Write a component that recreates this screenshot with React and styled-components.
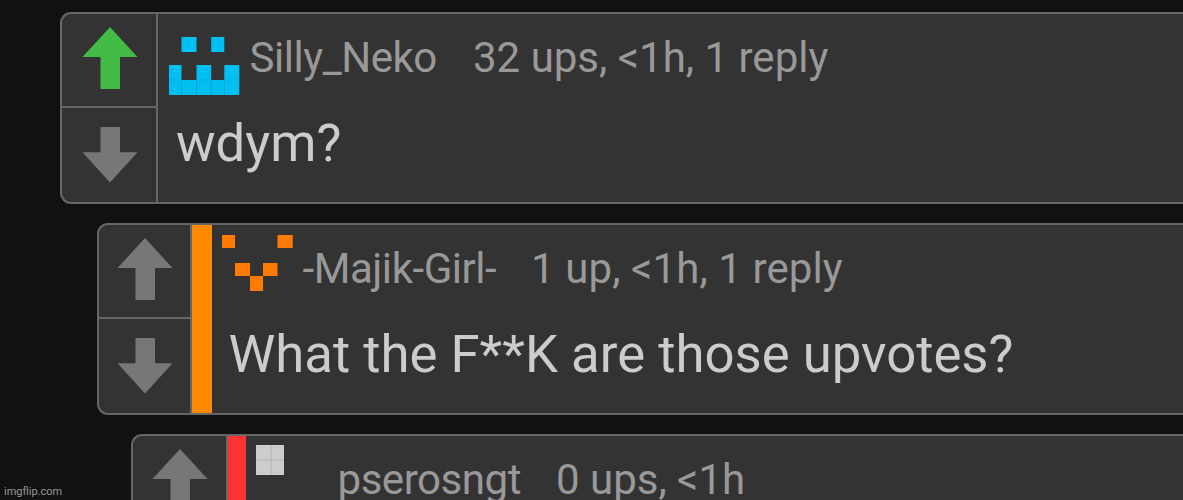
import React from "react";
import styled, { createGlobalStyle } from "styled-components";

const GlobalStyle = createGlobalStyle`
  * {
    box-sizing: border-box;
  }

  body {
    margin: 0;
    background: #111;
    overflow: hidden;
    font-family: Roboto, "Liberation Sans", sans-serif;
  }
`;

const comments = [
  {
    user: "Silly_Neko",
    stats: "32 ups, <1h, 1 reply",
    text: "wdym?",
    indent: 60,
    voteWidth: 98,
    arrowShift: 1,
    upvoted: true,
    iconColor: "#00bff3",
    iconGap: 11,
    xs: [0, 12.5, 27.5, 42.2, 55.3, 70.3],
    ys: [0, 13, 28, 41, 56, 71],
    seam: "#08a5d3",
    pixels: [[1, 1], [3, 1], [0, 3], [2, 3], [4, 3], [0, 4], [1, 4], [2, 4], [3, 4], [4, 4]],
    nameGap: 9.5,
    nameWidth: 223.5,
    textLeft: 18
  },
  {
    user: "-Majik-Girl-",
    stats: "1 up, <1h, 1 reply",
    text: "What the F**K are those upvotes?",
    indent: 97,
    voteWidth: 95,
    arrowShift: 1,
    bar: "#ff8a00",
    barWidth: 20,
    iconColor: "#ff7b00",
    iconGap: 10,
    xs: [0, 13, 28, 41, 55.5, 70.7],
    ys: [0, 13, 28, 41, 56, 71],
    seam: "#ff7b00",
    pixels: [[0, 0], [4, 0], [1, 2], [3, 2], [2, 3]],
    nameGap: 9.5,
    nameWidth: 228.5,
    statsSpacing: 0.1,
    textLeft: 16.5
  },
  {
    user: "pserosngt",
    stats: "0 ups, <1h",
    text: "",
    indent: 131,
    voteWidth: 97,
    arrowShift: 0,
    bar: "#ff3333",
    barWidth: 18,
    iconColor: "#cccccc",
    iconGap: 10,
    xs: [0, 15, 28, 42, 56, 71],
    ys: [-1, 14, 29, 42, 57, 71],
    seam: "#aaa",
    pixels: [[0, 0], [1, 0], [0, 1], [1, 1]],
    nameGap: 10.5,
    nameWidth: 218.5,
    textLeft: 18
  }
];

function PixelIcon({ xs, ys, pixels, color, seam }) {
  const filled = (x, y) => pixels.some(p => p[0] === x && p[1] === y);
  return (
    <Icon viewBox="0 0 71 71">
      {pixels.map(([x, y]) => (
        <rect
          key={`${x}-${y}`}
          x={xs[x]}
          y={ys[y]}
          width={xs[x + 1] - xs[x]}
          height={ys[y + 1] - ys[y]}
          fill={color}
        />
      ))}
      {pixels.map(([x, y]) => (
        <g key={`${x}-${y}`} stroke={seam} strokeWidth="0.7">
          {filled(x + 1, y) && (
            <line x1={xs[x + 1]} x2={xs[x + 1]} y1={ys[y]} y2={ys[y + 1]} />
          )}
          {filled(x, y + 1) && (
            <line x1={xs[x]} x2={xs[x + 1]} y1={ys[y + 1]} y2={ys[y + 1]} />
          )}
        </g>
      ))}
    </Icon>
  );
}

function Comment({ comment }) {
  return (
    <Card $indent={comment.indent}>
      <Votes $width={comment.voteWidth}>
        <VoteButton $up $shift={comment.arrowShift}>
          <svg width="56" height="62" viewBox="0 0 56 62">
            <path
              d="M28 0L55.5 30H38V62H18.5V30H0.5Z"
              fill={comment.upvoted ? "#44bb44" : "#777"}
            />
          </svg>
        </VoteButton>
        <VoteButton $shift={comment.arrowShift}>
          <svg width="56" height="56" viewBox="0 0 56 56">
            <path d="M18.5 0H38V25.3H55.5L28 55.5L0.5 25.3H18.5Z" fill="#777" />
          </svg>
        </VoteButton>
      </Votes>
      {comment.bar && <LevelBar $color={comment.bar} $width={comment.barWidth} />}
      <Content>
        <Header $gap={comment.iconGap}>
          <PixelIcon
            xs={comment.xs}
            ys={comment.ys}
            pixels={comment.pixels}
            color={comment.iconColor}
            seam={comment.seam}
          />
          <Name $gap={comment.nameGap} $width={comment.nameWidth}>
            {comment.user}
          </Name>
          <Stats $spacing={comment.statsSpacing || 0}>{comment.stats}</Stats>
        </Header>
        {comment.text && <Text $left={comment.textLeft}>{comment.text}</Text>}
      </Content>
    </Card>
  );
}

function App() {
  return (
    <Page>
      <GlobalStyle />
      <Thread>
        {comments.map(comment => (
          <Comment key={comment.user} comment={comment} />
        ))}
      </Thread>
      <Watermark>imgflip.com</Watermark>
    </Page>
  );
}

export default App;

const Page = styled.div`
  position: relative;
  width: 1183px;
  height: 500px;
  overflow: hidden;
  background: #111;
`;

const Thread = styled.div`
  display: flex;
  flex-direction: column;
  gap: 19px;
  padding-top: 12px;
`;

const Card = styled.div`
  display: flex;
  flex-shrink: 0;
  height: 192px;
  margin-left: ${props => props.$indent}px;
  background: #333;
  border: 2px solid #666;
  border-right: 0;
  border-radius: 11px 0 0 11px;
  overflow: hidden;
`;

const Votes = styled.div`
  display: flex;
  flex-direction: column;
  flex-shrink: 0;
  /* the card's left border counts towards the column */
  width: ${props => props.$width - 2}px;
  border-right: 2px solid #666;
`;

const VoteButton = styled.div`
  display: flex;
  justify-content: center;
  height: 94px;
  padding-top: ${props => (props.$up ? 13 : 19)}px;
  padding-left: ${props => props.$shift}px;
  border-bottom: ${props => (props.$up ? "2px solid #666" : "0")};
`;

const LevelBar = styled.div`
  flex-shrink: 0;
  width: ${props => props.$width}px;
  background: ${props => props.$color};
`;

const Content = styled.div`
  flex: 1;
  min-width: 0;
`;

const Header = styled.div`
  display: flex;
  height: 90px;
  padding: 10px 0 0 ${props => props.$gap}px;
  color: #999;
  font-size: 42px;
  line-height: 68px;
  white-space: nowrap;
`;

const Icon = styled.svg`
  flex-shrink: 0;
  width: 71px;
  height: 71px;
  overflow: visible;
`;

const Name = styled.div`
  flex-shrink: 0;
  width: ${props => props.$width}px;
  margin-left: ${props => props.$gap}px;
  letter-spacing: -0.45px;
`;

const Stats = styled.div`
  flex-shrink: 0;
  letter-spacing: ${props => props.$spacing}px;
`;

const Text = styled.div`
  padding-left: ${props => props.$left}px;
  color: #ccc;
  font-size: 52.7px;
  line-height: 78px;
  white-space: nowrap;
`;

const Watermark = styled.div`
  position: absolute;
  left: 4px;
  bottom: 1px;
  color: #999;
  font-size: 11px;
  line-height: 14px;
`;
